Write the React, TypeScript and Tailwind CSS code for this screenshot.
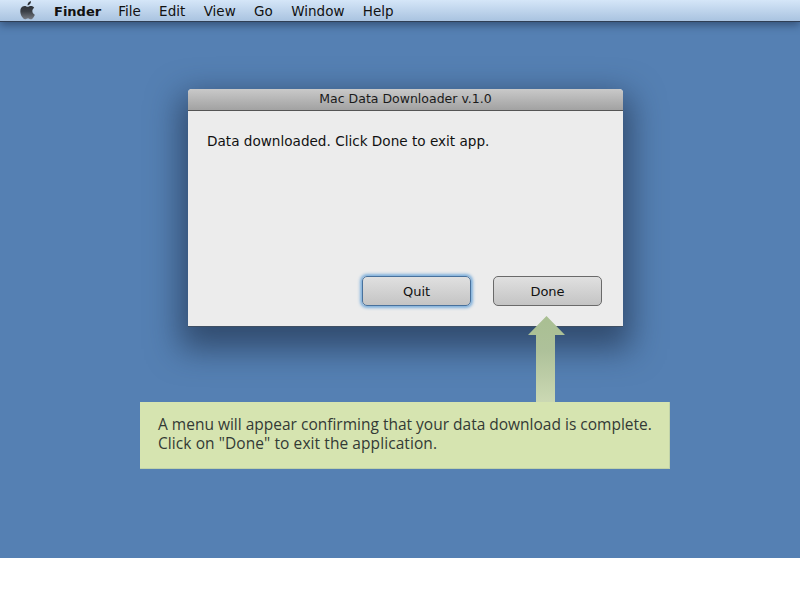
const menus = ['File', 'Edit', 'View', 'Go', 'Window', 'Help']

function AppleLogo() {
  return (
    <svg width="16" height="19" viewBox="2.2 2 12.6 15" className="block">
      <defs>
        <linearGradient id="apple" x1="0" y1="0" x2="0" y2="1">
          <stop offset="0" stopColor="#26292e" />
          <stop offset="0.55" stopColor="#3a3f46" />
          <stop offset="1" stopColor="#777c84" />
        </linearGradient>
      </defs>
      <path
        fill="url(#apple)"
        d="M11.9 9.9c0-1.7 1.4-2.5 1.5-2.6-.8-1.2-2.1-1.4-2.5-1.4-1.1-.1-2.1.6-2.7.6-.5 0-1.4-.6-2.3-.6-1.2 0-2.3.7-2.9 1.7-1.2 2.2-.3 5.4.9 7.1.6.9 1.3 1.8 2.2 1.8.9 0 1.2-.6 2.3-.6s1.4.6 2.3.6c1 0 1.6-.9 2.2-1.7.7-1 1-2 1-2-.1 0-2-.8-2-2.9zM10.1 4.4c.5-.6.8-1.4.7-2.2-.7 0-1.5.5-2 1.1-.4.5-.8 1.3-.7 2.1.8 0 1.5-.4 2-1z"
      />
    </svg>
  )
}

function PushButton({ label, focused }: { label: string; focused?: boolean }) {
  return (
    <button
      className={
        focused
          ? 'flex h-[30px] w-[109px] items-center justify-center rounded-[5px] border border-[#48719c] bg-gradient-to-b from-[#e0e0e0] to-[#c4c4c4] pt-[1px] text-[13px] text-[#111] shadow-[0_0_3px_2px_#7fb0dc]'
          : 'flex h-[30px] w-[109px] items-center justify-center rounded-[5px] border border-[#6a6a6a] bg-gradient-to-b from-[#e0e0e0] to-[#c4c4c4] pt-[1px] text-[13px] text-[#111]'
      }
    >
      {label}
    </button>
  )
}

export default function App() {
  return (
    <div className="h-[600px] w-[800px] overflow-hidden bg-white font-['DejaVu_Sans',sans-serif]">
      <div className="relative h-[558px] bg-[#5580b3]">
        <div className="flex h-[22px] items-center border-b border-[#2f3f55] bg-gradient-to-b from-[#d5e6f8] to-[#a9c3e0] pt-[2px] text-[13.5px] leading-none text-[#111] shadow-[0_3px_8px_rgba(30,50,80,0.6)]">
          <div className="-mt-[2px] ml-[20px] mr-[18px]">
            <AppleLogo />
          </div>
          <span className="mr-[17px] text-[13px] font-bold">Finder</span>
          <div className="flex gap-[18.4px]">
            {menus.map((m) => (
              <span key={m}>{m}</span>
            ))}
          </div>
        </div>

        <div className="absolute left-[188px] top-[89px] flex h-[238px] w-[435px] flex-col overflow-hidden rounded-t-[4px] border-b border-[#3f4f63] bg-[#ececec] shadow-[0_14px_32px_8px_rgba(25,40,65,0.6)]">
          <div className="flex h-[22px] items-center justify-center border-b border-[#555] bg-gradient-to-b from-[#c9c9c9] to-[#a2a2a2] text-[12.5px] text-[#1a1a1a]">
            Mac Data Downloader v.1.0
          </div>
          <div className="flex flex-1 flex-col justify-between pb-[20px] pl-[19px] pr-[21px] pt-[20px]">
            <p className="text-[13.6px] leading-[20px] text-[#111]">Data downloaded. Click Done to exit app.</p>
            <div className="flex justify-end gap-[22px]">
              <PushButton label="Quit" focused />
              <PushButton label="Done" />
            </div>
          </div>
        </div>

        <svg width="38" height="88" viewBox="0 0 38 88" className="absolute left-[528px] top-[316px]">
          <defs>
            <linearGradient id="arrow" x1="0" y1="0" x2="0" y2="1">
              <stop offset="0" stopColor="#a9bf92" />
              <stop offset="0.4" stopColor="#aec19a" />
              <stop offset="1" stopColor="#ccd9b4" />
            </linearGradient>
          </defs>
          <path fill="url(#arrow)" d="M18.5 0 37 19H27V87H8V19H0Z" />
        </svg>

        <div className="absolute left-[140px] top-[402px] h-[67px] w-[530px] border-b border-r border-[#c0d2a8] bg-[#d6e4b0] pl-[18px] pt-[13px] text-[15.5px] leading-[19px] text-[#333a35] font-['Open_Sans',sans-serif]">
          <p>A menu will appear confirming that your data download is complete.</p>
          <p className="tracking-[0.08px]">Click on "Done" to exit the application.</p>
        </div>
      </div>
    </div>
  )
}
